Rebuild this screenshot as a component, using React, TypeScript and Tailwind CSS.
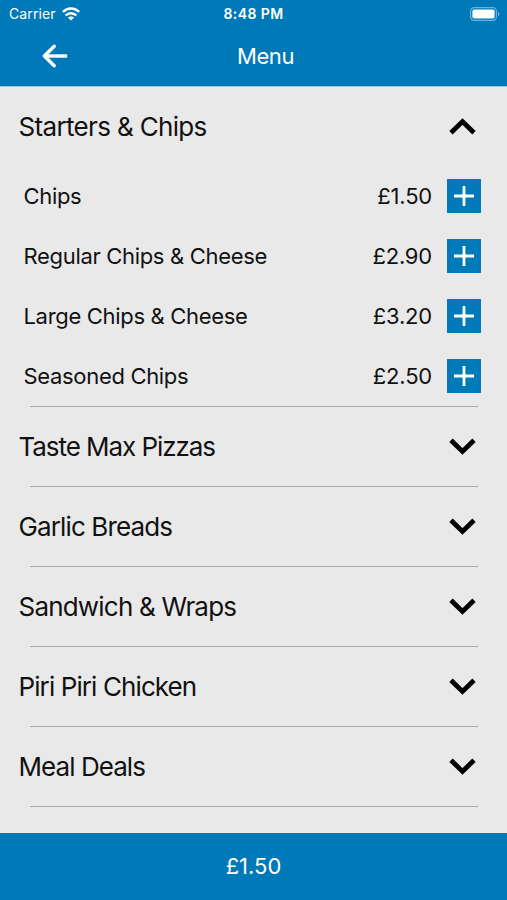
import React, { useState } from 'react';
import clsx from 'clsx';

interface MenuItem {
  name: string;
  price: string;
}

interface MenuSection {
  title: string;
  tracking: string;
  items: MenuItem[];
}

const SECTIONS: MenuSection[] = [
  {
    title: 'Starters & Chips',
    tracking: 'tracking-[-0.66px]',
    items: [
      { name: 'Chips', price: '£1.50' },
      { name: 'Regular Chips & Cheese', price: '£2.90' },
      { name: 'Large Chips & Cheese', price: '£3.20' },
      { name: 'Seasoned Chips', price: '£2.50' },
    ],
  },
  { title: 'Taste Max Pizzas', tracking: 'tracking-[-1.06px]', items: [] },
  { title: 'Garlic Breads', tracking: 'tracking-[-0.88px]', items: [] },
  { title: 'Sandwich & Wraps', tracking: 'tracking-[-0.8px]', items: [] },
  { title: 'Piri Piri Chicken', tracking: 'tracking-[-0.9px]', items: [] },
  { title: 'Meal Deals', tracking: 'tracking-[-0.94px]', items: [] },
];

function WifiIcon() {
  return (
    <svg width="18" height="14" viewBox="0 0 18 14" fill="none" stroke="white" strokeWidth="2.5">
      <path d="M0.9 5C5.4 0.4 12.6 0.4 17.1 5" />
      <path d="M3.7 8.5C6.6 5.5 11.4 5.5 14.3 8.5" />
      <path d="M9 13.6L5.9 10.6C7.6 9.1 10.4 9.1 12.1 10.6Z" fill="white" stroke="none" />
    </svg>
  );
}

function BatteryIcon() {
  return (
    <svg width="30" height="14" viewBox="0 0 30 14" fill="none">
      <rect x="0.6" y="0.6" width="25.8" height="12.8" rx="3.6" stroke="#6db3dc" strokeWidth="1.2" />
      <rect x="2.4" y="2.4" width="22.2" height="9.2" rx="1.8" fill="white" />
      <path d="M28 4.7C29.8 5.4 29.8 8.6 28 9.3Z" fill="#6db3dc" />
    </svg>
  );
}

function StatusBar() {
  return (
    <div className="grid h-[27px] grid-cols-3 items-center text-white">
      <div className="flex items-center gap-[6px] pl-[9px]">
        <span className="text-[14px] tracking-[0.1px]">Carrier</span>
        <WifiIcon />
      </div>
      <span className="text-center text-[14px] font-semibold tracking-[0.4px]">8:48 PM</span>
      <div className="flex justify-end pr-[7px]">
        <BatteryIcon />
      </div>
    </div>
  );
}

function NavBar() {
  return (
    <div className="grid h-[59px] grid-cols-[96px_1fr_72px] items-center pb-px text-white">
      <button className="flex justify-center pl-[14px]" aria-label="Back">
        <svg width="26" height="24" viewBox="0 0 26 24" fill="none" stroke="white" strokeWidth="3.4">
          <path d="M12.2 2.2L2.4 12L12.2 21.8" strokeLinecap="round" strokeLinejoin="round" />
          <path d="M2.5 12H25.2" />
        </svg>
      </button>
      <h1 className="text-center text-[22px] tracking-[-0.4px]">Menu</h1>
    </div>
  );
}

function ItemRow({ item }: { item: MenuItem }) {
  return (
    <div className="flex h-[60px] items-center pr-[26px] pl-[23.5px] text-[22px] text-[#111111]">
      <span className="flex-1 tracking-[-0.32px]">{item.name}</span>
      <span className="tracking-[-0.2px]">{item.price}</span>
      <button className="ml-[15px] flex size-[34px] items-center justify-center bg-[#0079b8]" aria-label={`Add ${item.name}`}>
        <svg width="20" height="20" viewBox="0 0 20 20" stroke="white" strokeWidth="2.8">
          <path d="M10 0V20M0 10H20" />
        </svg>
      </button>
    </div>
  );
}

interface SectionProps {
  section: MenuSection;
  open: boolean;
  onToggle: () => void;
}

function Section({ section, open, onToggle }: SectionProps) {
  return (
    <section>
      <button onClick={onToggle} className="flex h-20 w-full items-center justify-between pr-[31px] pl-[18.5px] text-[#111111]">
        <span className={clsx('text-[26px]', section.tracking)}>{section.title}</span>
        <svg
          className={clsx(open ? 'rotate-180' : 'mt-px')}
          width="27"
          height="17"
          viewBox="0 0 27 17"
          fill="none"
          stroke="black"
          strokeWidth="4.8"
        >
          <path d="M2 2.2L13.5 13.4L25 2.2" />
        </svg>
      </button>
      {open && section.items.map((item) => <ItemRow key={item.name} item={item} />)}
      <div className="-mb-px mr-[29px] ml-[30px] border-b border-[#a9a9a9]" />
    </section>
  );
}

export default function App() {
  const [openIndex, setOpenIndex] = useState(0);

  return (
    <div className="flex h-[900px] w-[507px] flex-col overflow-hidden bg-[#e9e9e9] font-['Inter',sans-serif]">
      <header className="-mb-px border-b border-[#a3cbe0] bg-[#0079b8]">
        <StatusBar />
        <NavBar />
      </header>

      <main className="flex-1 overflow-hidden">
        {SECTIONS.map((section, i) => (
          <Section
            key={section.title}
            section={section}
            open={i === openIndex}
            onToggle={() => setOpenIndex(i === openIndex ? -1 : i)}
          />
        ))}
      </main>

      {/* Basket total */}
      <footer className="flex h-[67px] items-center justify-center bg-[#0079b8] text-[22px] text-white">£1.50</footer>
    </div>
  );
}
